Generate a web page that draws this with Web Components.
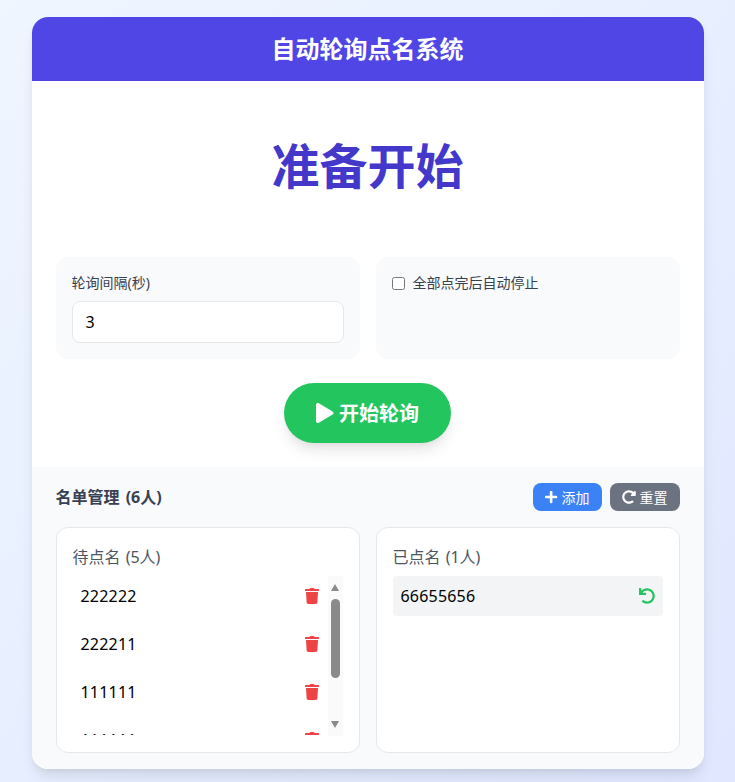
<!DOCTYPE html>
<html lang="zh-CN">
<head>
<meta charset="utf-8">
<title>自动轮询点名系统</title>
<style>
  html, body { height: 100%; }
  body {
    margin: 0;
    box-sizing: border-box;
    padding-top: 17px;
    overflow: hidden;
    background: linear-gradient(135deg, #eff6ff, #e0e7ff);
    font-family: "Noto Sans", "Noto Sans CJK SC", sans-serif;
  }
</style>
</head>
<body>
<poll-app></poll-app>

<script>
const ICONS = {
  play: ['0 0 448 512', 'M424.4 214.7L72.4 6.6C43.8-10.3 0 6.1 0 47.9V464c0 37.5 40.7 60.1 72.4 41.3l352-208c31.4-18.5 31.5-64.1 0-82.6z'],
  plus: ['0 0 448 512', 'M416 208H272V64c0-17.67-14.33-32-32-32h-32c-17.67 0-32 14.33-32 32v144H32c-17.67 0-32 14.33-32 32v32c0 17.67 14.33 32 32 32h144v144c0 17.67 14.33 32 32 32h32c17.67 0 32-14.33 32-32V304h144c17.67 0 32-14.33 32-32v-32c0-17.67-14.33-32-32-32z'],
  redo: ['0 0 512 512', 'M256.455 8c66.269.119 126.437 26.233 170.859 68.685l35.715-35.715C478.149 25.851 504 36.559 504 57.941V192c0 13.255-10.745 24-24 24H345.941c-21.382 0-32.09-25.851-16.971-40.971l41.75-41.75c-30.864-28.899-70.801-44.907-113.23-45.273-92.398-.798-170.283 73.977-169.484 169.442C88.764 348.009 162.184 424 256 424c41.127 0 79.997-14.678 110.629-41.556 4.743-4.161 11.906-3.908 16.368.553l39.662 39.662c4.872 4.872 4.631 12.815-.482 17.433C378.202 479.813 319.926 504 256 504 119.034 504 8.001 392.967 8 256.002 7.999 119.193 119.646 7.755 256.455 8z'],
  trash: ['0 0 448 512', 'M432 32H312l-9.4-18.7A24 24 0 0 0 281.1 0H166.8a23.72 23.72 0 0 0-21.4 13.3L136 32H16A16 16 0 0 0 0 48v32a16 16 0 0 0 16 16h416a16 16 0 0 0 16-16V48a16 16 0 0 0-16-16zM53.2 467a48 48 0 0 0 47.9 45h245.8a48 48 0 0 0 47.9-45L416 128H32z'],
  undo: ['0 0 512 512', 'M212.333 224.333H12c-6.627 0-12-5.373-12-12V12C0 5.373 5.373 0 12 0h48c6.627 0 12 5.373 12 12v78.112C117.773 39.279 184.26 7.47 258.175 8.007c136.906.994 246.448 111.623 246.157 248.532C504.041 393.258 393.12 504 256.333 504c-64.089 0-122.496-24.313-166.51-64.215-5.099-4.622-5.334-12.554-.467-17.42l33.967-33.967c4.474-4.474 11.662-4.717 16.401-.525C170.76 415.336 211.58 432 256.333 432c97.268 0 176-78.716 176-176 0-97.267-78.716-176-176-176-58.496 0-110.28 28.476-142.274 72.333h98.274c6.627 0 12 5.373 12 12v48c0 6.627-5.373 12-12 12z']
};

class FaIcon extends HTMLElement {
  constructor() {
    super();
    this.attachShadow({ mode: 'open' });
  }
  connectedCallback() {
    const [box, d] = ICONS[this.getAttribute('name')];
    this.shadowRoot.innerHTML = `
      <style>
        :host { display: inline-flex; flex: none; }
        svg { display: block; height: 1em; width: auto; fill: currentColor; }
      </style>
      <svg viewBox="${box}" aria-hidden="true"><path d="${d}"></path></svg>
    `;
  }
}

class SettingCard extends HTMLElement {
  constructor() {
    super();
    this.attachShadow({ mode: 'open' });
    this.shadowRoot.innerHTML = `
      <style>
        :host {
          display: block;
          box-sizing: border-box;
          height: 102px;
          padding: 16px;
          background: #f9fafb;
          border-radius: 12px;
          font-size: 14px;
          color: #374151;
        }
      </style>
      <slot></slot>
    `;
  }
}

class ToolButton extends HTMLElement {
  constructor() {
    super();
    this.attachShadow({ mode: 'open' });
    this.shadowRoot.innerHTML = `
      <style>
        :host {
          display: inline-flex;
          align-items: center;
          justify-content: center;
          gap: 4px;
          box-sizing: border-box;
          height: 28px;
          padding: 0 12px 1px;
          border-radius: 8px;
          font-size: 14px;
          color: #fff;
          background: var(--tool-bg, #3b82f6);
        }
      </style>
      <slot></slot>
    `;
  }
}

class RosterItem extends HTMLElement {
  constructor() {
    super();
    this.attachShadow({ mode: 'open' });
    this.shadowRoot.innerHTML = `
      <style>
        :host {
          display: flex;
          align-items: center;
          justify-content: space-between;
          flex: none;
          box-sizing: border-box;
          height: 40px;
          padding: 0 8px;
          border-radius: 4px;
          font-size: 16px;
          letter-spacing: 0.2px;
          color: #000;
        }
        :host([done]) { background: #f3f4f6; }
      </style>
      <span><slot></slot></span>
      <slot name="action"></slot>
    `;
  }
}

class RosterPanel extends HTMLElement {
  constructor() {
    super();
    this.attachShadow({ mode: 'open' });
    this.shadowRoot.innerHTML = `
      <style>
        :host {
          display: flex;
          flex-direction: column;
          box-sizing: border-box;
          height: 226px;
          padding: 16px;
          background: #fff;
          border: 1px solid #e5e7eb;
          border-radius: 12px;
        }
        h3 {
          margin: 0 0 6px;
          font-size: 16px;
          line-height: 26px;
          font-weight: 400;
          word-spacing: 1px;
          color: #4b5563;
        }
        .body { display: flex; min-height: 0; flex: 1; }
        .items {
          flex: 1;
          min-width: 0;
          margin-bottom: 1px;
          display: flex;
          flex-direction: column;
          gap: 8px;
          overflow: hidden;
        }
      </style>
      <h3></h3>
      <div class="body">
        <div class="items"><slot></slot></div>
        <slot name="bar"></slot>
      </div>
    `;
  }
  connectedCallback() {
    this.shadowRoot.querySelector('h3').textContent = this.dataset.title;
  }
}

class ScrollRail extends HTMLElement {
  constructor() {
    super();
    this.attachShadow({ mode: 'open' });
    this.shadowRoot.innerHTML = `
      <style>
        :host {
          display: flex;
          flex-direction: column;
          align-items: center;
          flex: none;
          box-sizing: border-box;
          width: 15px;
          background: #fafafa;
          padding-top: 8px;
        }
        .up, .down { width: 0; height: 0; border-left: 4.5px solid transparent; border-right: 4.5px solid transparent; }
        .up { border-bottom: 7px solid #8a8a8a; }
        .down { border-top: 7px solid #8a8a8a; margin-top: 43px; }
        .thumb { width: 9px; height: 79px; margin-top: 8px; border-radius: 5px; background: #8a8a8a; }
      </style>
      <div class="up"></div>
      <div class="thumb"></div>
      <div class="down"></div>
    `;
  }
}

class PollApp extends HTMLElement {
  constructor() {
    super();
    this.attachShadow({ mode: 'open' });
    this.shadowRoot.innerHTML = `
      <style>
        :host {
          display: block;
          box-sizing: border-box;
          width: 672px;
          height: 752px;
          margin: 0 auto;
          background: #fff;
          border-radius: 16px;
          overflow: hidden;
          box-shadow: 0 10px 15px -3px rgba(0, 0, 0, 0.1), 0 4px 6px -2px rgba(0, 0, 0, 0.05);
        }
        header {
          box-sizing: border-box;
          height: 64px;
          padding-bottom: 3px;
          display: flex;
          align-items: center;
          justify-content: center;
          background: #4f46e5;
          color: #fff;
          font-size: 24px;
          font-weight: 700;
        }
        .status {
          box-sizing: border-box;
          height: 176px;
          padding-bottom: 12px;
          display: flex;
          align-items: center;
          justify-content: center;
          font-size: 48px;
          font-weight: 700;
          color: #4338ca;
        }
        .settings {
          display: grid;
          grid-template-columns: 1fr 1fr;
          gap: 16px;
          padding: 0 24px;
        }
        .field-label { display: block; line-height: 20px; margin: 0 0 8px; }
        input[type=text] {
          display: block;
          box-sizing: border-box;
          width: 100%;
          height: 42px;
          padding: 0 12px 0 13px;
          border: 1px solid #e5e7eb;
          border-radius: 8px;
          background: #fff;
          font: inherit;
          font-size: 16px;
          color: #000;
          outline: none;
        }
        .check { display: flex; align-items: center; gap: 8px; line-height: 20px; }
        .check input { width: 13px; height: 13px; margin: 0; }
        .actions { display: flex; justify-content: center; padding: 24px 0; }
        .start {
          display: inline-flex;
          align-items: center;
          gap: 5.5px;
          height: 60px;
          padding: 0 32px;
          border-radius: 30px;
          background: #22c55e;
          color: #fff;
          font-size: 20px;
          font-weight: 700;
          box-shadow: 0 10px 15px -3px rgba(0, 0, 0, 0.1), 0 4px 6px -2px rgba(0, 0, 0, 0.05);
        }
        .start span { padding-bottom: 2px; }
        .roster {
          height: 302px;
          box-sizing: border-box;
          padding: 16px 24px;
          background: #f9fafb;
        }
        .roster-head {
          display: flex;
          align-items: center;
          justify-content: space-between;
          height: 28px;
          margin-bottom: 16px;
        }
        h2 { margin: 0; padding-bottom: 2px; font-size: 16px; font-weight: 700; word-spacing: 2px; color: #374151; }
        .tools { display: flex; gap: 8px; }
        .redo { --tool-bg: #6b7280; }
        .lists { display: grid; grid-template-columns: 1fr 1fr; gap: 16px; }
        .del { color: #ef4444; font-size: 16px; margin-right: 1px; }
        .back { color: #22c55e; font-size: 16px; }
      </style>

      <header>自动轮询点名系统</header>
      <div class="status">准备开始</div>

      <div class="settings">
        <setting-card>
          <label class="field-label" for="gap">轮询间隔(秒)</label>
          <input id="gap" type="text" value="3">
        </setting-card>
        <setting-card>
          <label class="check"><input type="checkbox">全部点完后自动停止</label>
        </setting-card>
      </div>

      <div class="actions">
        <div class="start"><fa-icon name="play"></fa-icon><span>开始轮询</span></div>
      </div>

      <section class="roster">
        <div class="roster-head">
          <h2>名单管理 (6人)</h2>
          <div class="tools">
            <tool-button><fa-icon name="plus"></fa-icon>添加</tool-button>
            <tool-button class="redo"><fa-icon name="redo"></fa-icon>重置</tool-button>
          </div>
        </div>
        <div class="lists">
          <roster-panel data-title="待点名 (5人)">
            <roster-item>222222<fa-icon slot="action" class="del" name="trash"></fa-icon></roster-item>
            <roster-item>222211<fa-icon slot="action" class="del" name="trash"></fa-icon></roster-item>
            <roster-item>111111<fa-icon slot="action" class="del" name="trash"></fa-icon></roster-item>
            <roster-item>111111<fa-icon slot="action" class="del" name="trash"></fa-icon></roster-item>
            <scroll-rail slot="bar"></scroll-rail>
          </roster-panel>
          <roster-panel data-title="已点名 (1人)">
            <roster-item done>66655656<fa-icon slot="action" class="back" name="undo"></fa-icon></roster-item>
          </roster-panel>
        </div>
      </section>
    `;
  }
}

customElements.define('fa-icon', FaIcon);
customElements.define('setting-card', SettingCard);
customElements.define('tool-button', ToolButton);
customElements.define('roster-item', RosterItem);
customElements.define('roster-panel', RosterPanel);
customElements.define('scroll-rail', ScrollRail);
customElements.define('poll-app', PollApp);
</script>
</body>
</html>
